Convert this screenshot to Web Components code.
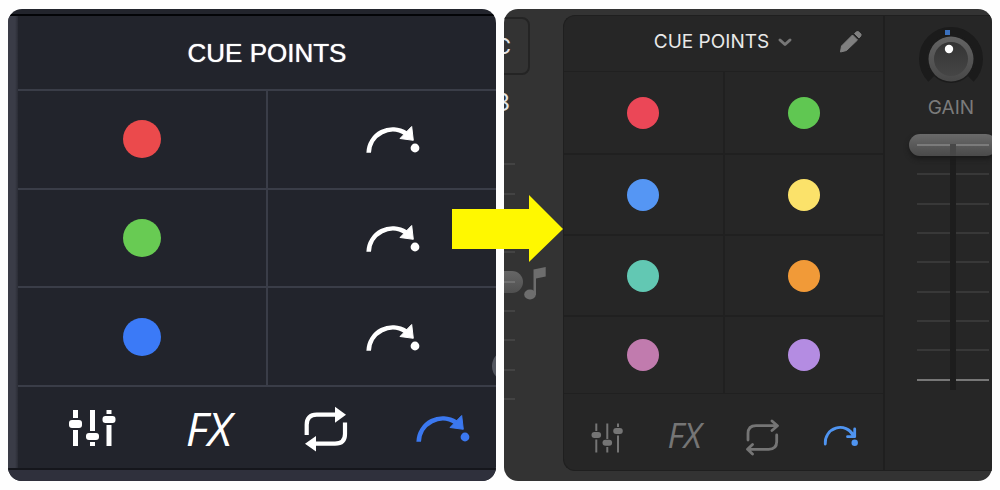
<!DOCTYPE html>
<html lang="en">
<head>
<meta charset="utf-8">
<title>Cue points</title>
<style>
html,body{margin:0;background:#fefefe}
body{font-family:Inter,"Liberation Sans",sans-serif}
</style>
</head>
<body>
<cue-compare></cue-compare>
<script>
const define = (name, html, init) => customElements.define(name, class extends HTMLElement {
  connectedCallback() {
    if (this.shadowRoot) return;
    const root = this.attachShadow({ mode: 'open' });
    root.innerHTML = typeof html === 'function' ? html(this) : html;
    if (init) init(root, this);
  }
});

const reset = `<style>*{box-sizing:border-box}button{appearance:none;border:0;margin:0;padding:0;background:none;color:inherit;font:inherit;cursor:pointer}svg{display:block}</style>`;

const bold = {
  mixer: `<path fill="currentColor" d="M11 6h5v8h-5zM11 26h5v16h-5zM28 6h5v21h-5zM28 38h5v4h-5zM44.500 6h5v4h-5zM44.500 21h5v21h-5z"/><g fill="currentColor"><rect x="7" y="16" width="13" height="8" rx="3"/><rect x="24" y="29" width="13" height="7" rx="3"/><rect x="40.500" y="12" width="13" height="7" rx="3"/></g>`,
  loop: `<g fill="none" stroke="currentColor" stroke-width="4.200"><path d="M11.700 31V20.700Q11.700 10.700 21.700 10.700H41"/><path d="M50 18.500V30Q50 39.700 40 39.700H20"/></g><path fill="currentColor" d="M40 2.700L51 10.700L40 18.700zM21 32L10 39.700L21 47.600z"/>`,
  cue: `<path fill="none" stroke="currentColor" stroke-width="4.600" d="M6.700 37.700A24 24 0 0 1 44 18.500"/><path fill="currentColor" stroke="currentColor" stroke-linejoin="round" d="M49.700 11.500L51.300 25.300L38 23.500z"/><circle cx="53" cy="33" r="4.400" fill="currentColor"/>`
};
const thin = {
  mixer: `<path fill="none" stroke="currentColor" stroke-width="2" d="M13.300 10.500V18M13.300 26.500V39.500M24.300 10.500V26M24.300 34V39.500M35 10.500V14M35 22.500V39.500"/><g fill="currentColor"><rect x="8.500" y="19" width="9.600" height="6" rx="3"/><rect x="19.500" y="26.700" width="9.600" height="6" rx="3"/><rect x="30.200" y="15" width="9.600" height="6" rx="3"/></g>`,
  loop: `<g fill="none" stroke="currentColor" stroke-width="2.800" stroke-linecap="round" stroke-linejoin="round"><path d="M10 27V20.700Q10 12.700 18 12.700H39M34 8L39.500 12.700L34 17.500M38.700 22V28.500Q38.700 36.300 30.700 36.300H10M14.500 31.500L9.500 36.300L14.500 41"/></g>`,
  cue: `<g fill="none" stroke="currentColor" stroke-width="2.800" stroke-linecap="round" stroke-linejoin="round"><path d="M9.300 31A15 15 0 0 1 37.500 22.500M38.700 16V23.700H31.500"/></g><circle cx="38.700" cy="29.700" r="3.200" fill="currentColor"/>`
};

define('deck-icon', el => {
  const set = el.hasAttribute('thin') ? thin : bold;
  const [w, h] = el.hasAttribute('thin') ? [48, 44] : [60, 48];
  return `${reset}<style>:host{display:block}</style><svg width="${w}" height="${h}" viewBox="0 0 ${w} ${h}" aria-hidden="true">${set[el.getAttribute('name')]}</svg>`;
});

define('cue-dot', el => `<style>:host{display:block;width:var(--dot,32px);height:var(--dot,32px);border-radius:50%;background:${el.getAttribute('color')}}</style>`);

define('deck-tabs', el => {
  const kind = el.hasAttribute('thin') ? 'thin' : '';
  return `${reset}<style>
:host{display:grid;grid-template-columns:repeat(4,1fr);align-items:center}
button{display:flex;align-items:center;justify-content:center;height:100%}
.fx{font-family:"Open Sans",sans-serif;font-style:italic;font-weight:500;font-size:var(--fx,46px);line-height:48px}
.on{color:var(--active)}
</style>
<button aria-label="Mixer"><deck-icon name="mixer" ${kind}></deck-icon></button>
<button class="fx">FX</button>
<button aria-label="Loop"><deck-icon name="loop" ${kind}></deck-icon></button>
<button class="on" aria-label="Cue points"><deck-icon name="cue" ${kind}></deck-icon></button>`;
});

define('classic-deck', `${reset}<style>
:host{display:flex;flex-direction:column;position:relative;overflow:hidden;border-radius:14px;background:#22242c;color:#fff}
.top{height:7px;border-bottom:2px solid #030407}
.mid{flex:1;display:flex;border-bottom:2px solid #15161c}
.edge{width:10px;background:linear-gradient(90deg,#3a3c47 70%,#2a2c35)}
.panel{flex:1;margin-right:-20px;display:flex;flex-direction:column}
h2{margin:0;height:73px;display:flex;align-items:center;justify-content:center;font:400 26px/32px "Liberation Sans",sans-serif;text-shadow:0 0 1px #fff}
.pads{flex:1;display:grid;grid-template-columns:1fr 1fr;grid-auto-rows:1fr;gap:2px;padding:2px 0;background:#3a3d48;--dot:38px}
.pads button{background:#22242c;display:flex;align-items:center;justify-content:center}
deck-tabs{height:81px;padding:0 16px;--active:#3b78f0}
.base{height:11px;background:#2f303c}
.knob{position:absolute;right:-28px;top:341px;width:32px;height:32px;border-radius:50%;background:#555861}
</style>
<div class="top"></div>
<div class="mid"><div class="edge"></div>
<section class="panel"><h2>CUE POINTS</h2>
<div class="pads">
<button aria-label="Red cue"><cue-dot color="#eb4a4c"></cue-dot></button><button aria-label="Jump to red"><deck-icon name="cue"></deck-icon></button>
<button aria-label="Green cue"><cue-dot color="#68cb53"></cue-dot></button><button aria-label="Jump to green"><deck-icon name="cue"></deck-icon></button>
<button aria-label="Blue cue"><cue-dot color="#3b7af7"></cue-dot></button><button aria-label="Jump to blue"><deck-icon name="cue"></deck-icon></button>
</div><deck-tabs></deck-tabs></section></div>
<div class="base"></div><div class="knob"></div>`);

define('deck-edge', `${reset}<style>
:host{display:flex;flex-direction:column;width:60px;position:relative;color:#e4e4e4}
.sync{width:56px;height:58px;margin:2px 0 0 -30px;padding-right:17px;border:2px solid #242424;border-radius:8px;text-align:right;font-size:22px}
.num{margin:14px 0 0 -10px;width:16px;font-size:24px;line-height:28px;text-align:right}
.tempo{position:absolute;left:0;top:0}
</style>
<button class="sync">C</button><span class="num">3</span>
<svg class="tempo" width="60" height="455" viewBox="0 0 60 455" aria-hidden="true">
<defs><linearGradient id="g" x2="0" y2="1"><stop stop-color="#666"/><stop offset="1" stop-color="#505050"/></linearGradient></defs>
<path stroke="#434343" stroke-width="2" d="M0 149h11M0 179h11M0 208h11M0 237h11M0 296h11M0 325h11M0 355h11M0 384h11"/>
<rect x="-30" y="256" width="49" height="22" rx="11" fill="url(#g)"/><path stroke="#707070" stroke-width="2" d="M0 267h11"/>
<path fill="#6d6d6d" d="M29.500 254.500L41.700 252V261.500L32 263.500V280H29.500z"/><ellipse cx="26" cy="279.500" rx="5.800" ry="5" fill="#6d6d6d"/>
</svg>`);

define('cue-panel', `${reset}<style>
:host{flex:1;display:flex;flex-direction:column;border-right:2px solid #1f1f1f}
header{height:55px;display:grid;grid-template-columns:1fr auto 1fr;align-items:center;padding-bottom:3px}
.title{grid-column:2;display:flex;align-items:center;gap:8px;color:#e9e9e9;font-size:19px;line-height:24px}
.edit{justify-self:end;margin-right:20px}
.pads{flex:1;display:grid;grid-template-columns:1fr 1fr;grid-template-rows:82fr 79fr 80fr 76fr;gap:2px;padding:1px 0;background:#202020}
.pads button{background:#262626;display:flex;align-items:center;justify-content:center}
deck-tabs{height:76px;padding:6px 4px 0;color:#757575;--fx:34px;--active:#4f94f0}
</style>
<header><button class="title">CUE POINTS<svg width="16" height="12" viewBox="0 0 16 12" aria-hidden="true"><path d="M3 4L8 8.500L13 4" fill="none" stroke="#777" stroke-width="3" stroke-linecap="round" stroke-linejoin="round"/></svg></button>
<button class="edit" aria-label="Edit"><svg width="24" height="24" viewBox="0 0 24 24"><path fill="#808080" stroke="#808080" stroke-linejoin="round" d="M13.500 5L18.500 10L7.500 20.500L1.500 22L2.500 16z"/><path fill="#808080" stroke="#808080" stroke-linejoin="round" d="M15.500 3.500L17.500 1.800Q19 1 20.500 2.500Q23 4.500 21.800 6L20 8z"/></svg></button></header>
<div class="pads"></div><deck-tabs thin></deck-tabs>`, root => {
  const colors = { Red: '#eb4757', Green: '#60c752', Blue: '#5596f4', Yellow: '#fbe26a', Teal: '#62c8b3', Orange: '#f19a38', Pink: '#c17bae', Purple: '#b48ce2' };
  root.querySelector('.pads').innerHTML = Object.entries(colors).map(([n, c]) => `<button aria-label="${n} cue"><cue-dot color="${c}"></cue-dot></button>`).join('');
});

define('gain-knob', `${reset}<style>
:host{display:flex;flex-direction:column;align-items:center}
.dial{position:relative}
input{position:absolute;inset:0;width:100%;height:100%;margin:0;opacity:0}
label{color:#7b7b7b;font-size:19px;line-height:24px;margin-top:4px}
</style>
<div class="dial"><svg width="66" height="66" viewBox="0 0 66 66" aria-hidden="true">
<defs><linearGradient id="rim" x2="0" y2="1"><stop stop-color="#636363"/><stop offset="1" stop-color="#484848"/></linearGradient><linearGradient id="cap" x2="0" y2="1"><stop stop-color="#343434"/><stop offset="1" stop-color="#454545"/></linearGradient></defs>
<path d="M13.200 52.800A28 28 0 1 1 52.800 52.800" fill="none" stroke="#1b1b1b" stroke-width="8"/>
<circle cx="33" cy="33" r="24" fill="#1b1b1b"/><circle cx="33" cy="33" r="22.500" fill="url(#rim)"/><circle cx="33" cy="33" r="17" fill="url(#cap)"/>
<circle cx="31" cy="23" r="4.200" fill="#fff"/><rect x="27" y="4" width="5" height="5" fill="#3a70bd"/></svg>
<input id="gain" type="range"></div><label for="gain">GAIN</label>`);

define('volume-fader', `${reset}<style>
:host{display:block;position:relative;width:88px;height:256px}
svg{position:absolute;inset:0}
input{position:absolute;inset:0;width:88px;height:256px;margin:0;appearance:none;background:none;writing-mode:vertical-lr;direction:rtl}
input::-webkit-slider-runnable-track{width:88px;height:100%;background:none}
input::-webkit-slider-thumb{appearance:none;width:88px;height:22px;border-radius:11px;box-shadow:0 3px 5px #1a1a1a;
background:linear-gradient(#7b7b7b,#7b7b7b) 8px 10px/33px 2px no-repeat,linear-gradient(#7b7b7b,#7b7b7b) 47px 10px/33px 2px no-repeat,linear-gradient(#474747,#474747) 41px 10px/6px 12px no-repeat,linear-gradient(#6a6a6a,#4a4a4a)}
</style>
<svg width="88" height="256" viewBox="0 0 88 256" aria-hidden="true"></svg>
<input type="range" min="0" max="100" value="100" aria-label="Volume">`, root => {
  let s = '<rect x="41" y="22" width="6" height="234" fill="#1d1d1d"/>';
  for (let i = 1; i < 9; i++) {
    const y = Math.round(11 + i * 29.35);
    s += `<path stroke="${i === 8 ? '#777' : '#383838'}" stroke-width="2" d="M8 ${y}h33M47 ${y}h33"/>`;
  }
  root.querySelector('svg').innerHTML = s;
});

define('modern-deck', `${reset}<style>
:host{display:flex;overflow:hidden;border-radius:14px;background:#333;padding:6px 0 10px}
.board{flex:1;min-width:0;display:flex;border:1px solid #1f1f1f;border-right:0;border-radius:12px 0 0 12px;background:#262626;overflow:hidden}
deck-edge{flex:none;margin-right:-1px}
.strip{width:107px;flex:none;display:flex;flex-direction:column;overflow:hidden;padding-top:10px}
.inner{width:136px;display:flex;flex-direction:column;align-items:center;gap:14px}
gain-knob{margin-right:4px}
</style>
<deck-edge></deck-edge>
<section class="board"><cue-panel></cue-panel><div class="strip"><div class="inner"><gain-knob></gain-knob><volume-fader></volume-fader></div></div></section>`);

define('cue-compare', `${reset}<style>
:host{display:flex;gap:8px;position:relative;min-height:100vh;padding:9px 8px;box-sizing:border-box}
classic-deck,modern-deck{flex:1;min-width:0}
.arrow{position:absolute;left:calc(50% - 48px);top:195px}
</style>
<classic-deck></classic-deck><modern-deck></modern-deck>
<svg class="arrow" width="111" height="68" viewBox="0 0 111 68" aria-hidden="true"><path fill="#fff800" d="M0 14H77V0L111 34L77 67V54H0z"/></svg>`);
</script>
</body>
</html>
